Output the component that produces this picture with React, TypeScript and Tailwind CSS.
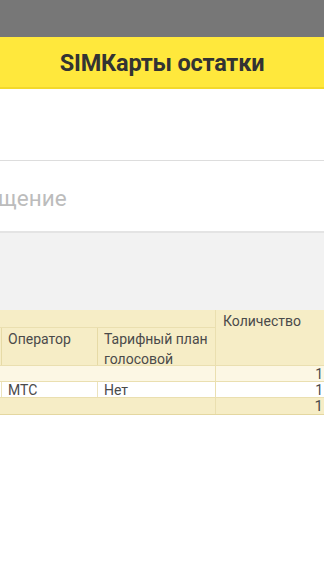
import React from "react";

export default function App() {
  const font = { fontFamily: "Roboto, 'Noto Sans', sans-serif" } as React.CSSProperties;
  return (
    <div className="w-[324px] h-[576px] bg-white overflow-hidden flex flex-col" style={font}>
      <div className="h-[37px] bg-[#777777] shrink-0" />
      <div className="h-[52px] bg-[#ffe83c] border-b-2 border-[#f3d92a] flex items-center justify-center pt-[3px] shrink-0">
        <span className="text-[23.5px] font-bold text-[#333333] tracking-[-0.2px]">SIMКарты остатки</span>
      </div>
      <div className="h-[72px] bg-white border-b border-[#dddddd] shrink-0" />
      <div className="h-[72px] bg-white border-b-2 border-[#e4e4e4] flex items-center pt-[5px] shrink-0">
        <span className="text-[22.5px] text-[#bcbcbc] ml-[-2px] leading-none">щение</span>
      </div>
      <div className="h-[77px] bg-[#f2f2f2] shrink-0" />
      <div className="flex flex-col text-[14px] text-[#4a4a4a] w-[340px]">
        <div className="flex">
          <div className="w-[215px] flex flex-col">
            <div className="h-[18px] bg-[#f6edc6] border-b border-[#eadfb0]" />
            <div className="h-[38px] bg-[#f6edc6] border-b border-[#eadfb0] flex">
              <div className="w-[97px] border-l border-r border-[#e6daa6] ml-[1px] pl-[6px] pt-[1px] leading-[20px]">Оператор</div>
              <div className="flex-1 pl-[6px] pt-[1px] leading-[20px]">Тарифный план голосовой</div>
            </div>
          </div>
          <div className="w-[125px] bg-[#f6edc6] border-l border-b border-[#eadfb0] pl-[7px] pt-[2px] leading-[19px]">Количество</div>
        </div>
        <div className="flex h-[16px] bg-[#fcf7e4] border-b border-[#eadfb0]">
          <div className="w-[215px]" />
          <div className="w-[109px] border-l border-[#eadfb0] text-right leading-[16px] pr-[1px]">1</div>
        </div>
        <div className="flex h-[16px] bg-white border-b border-[#eadfb0]">
          <div className="w-[97px] ml-[1px] border-l border-r border-[#ece3bd] pl-[6px] leading-[16px]">МТС</div>
          <div className="w-[117px] pl-[6px] leading-[16px]">Нет</div>
          <div className="w-[109px] border-l border-[#eadfb0] text-right leading-[16px] pr-[1px]">1</div>
        </div>
        <div className="flex h-[17px] bg-[#f6edc6] border-b border-[#e4d7a0]">
          <div className="w-[215px]" />
          <div className="w-[109px] border-l border-[#eadfb0] text-right text-[15px] leading-[17px] pr-[1px]">1</div>
        </div>
      </div>
    </div>
  );
}
